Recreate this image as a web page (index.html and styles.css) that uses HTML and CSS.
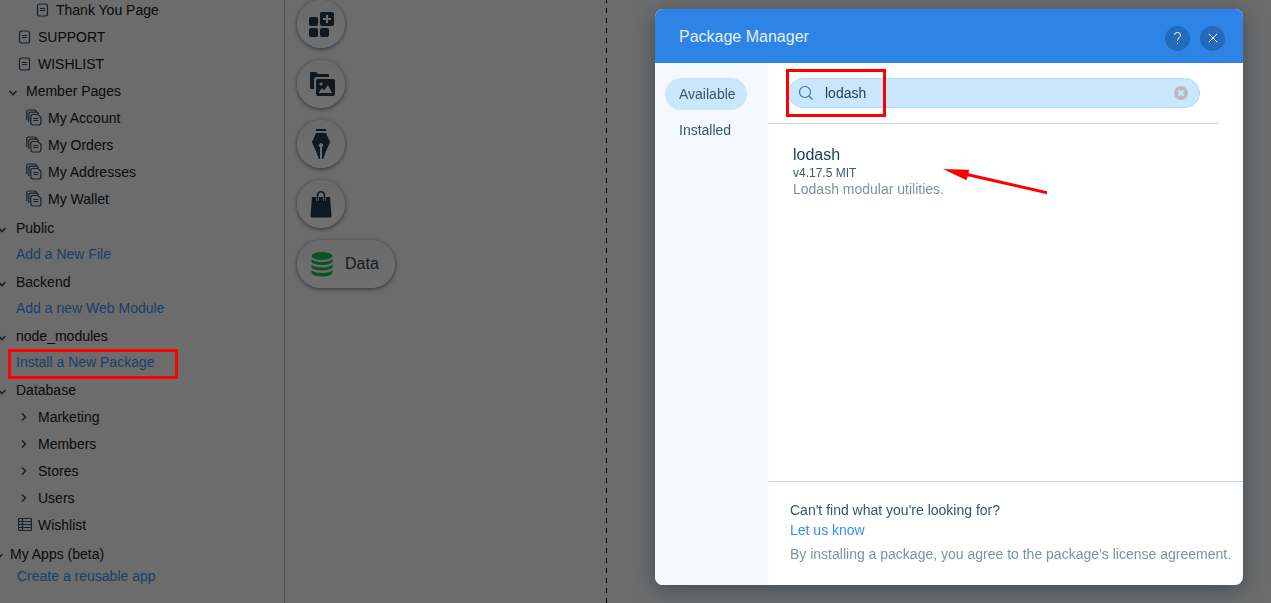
FILE: index.html
```html
<!DOCTYPE html>
<html lang="en">
<head>
<meta charset="utf-8">
<title>Package Manager</title>
<link rel="stylesheet" href="styles.css">
</head>
<body>
<svg class="defs" aria-hidden="true">
  <symbol id="page" viewBox="0 0 13 14"><path d="M3.500 1h6a2 2 0 0 1 2 2v8a2 2 0 0 1-2 2h-6a2 2 0 0 1-2-2V3a2 2 0 0 1 2-2zM4 5.500h5M4 7.500h5"/></symbol>
  <symbol id="pages" viewBox="0 0 16 17"><path d="M6.500 5.500h5.500l3 3v5q0 2.500-2.500 2.500H7.500Q4.800 16 4.800 13.500V7.500Q4.800 5.500 6.500 5.500zM2.800 13V5.200Q2.800 3.200 4.800 3.200H11l1.800 1.500M.8 11V3Q.8 1 2.800 1H9l1.800 1.500M7.300 9.500h5M7.300 11.500h5"/></symbol>
  <symbol id="down" viewBox="0 0 10 6"><path d="M1.500 1L5 4.500 8.500 1" stroke-width="1.600"/></symbol>
  <symbol id="right" viewBox="0 0 6 10"><path d="M1 1.500L4.500 5 1 8.500" stroke-width="1.600"/></symbol>
  <symbol id="grid" viewBox="0 0 14 13"><path d="M1.500.5h11a1 1 0 0 1 1 1v10a1 1 0 0 1-1 1h-11a1 1 0 0 1-1-1v-10a1 1 0 0 1 1-1zM4.500.5v12M.5 3.500h13M.5 6.500h13M.5 9.500h13"/></symbol>
</svg>

<div class="editor">
  <nav class="sidebar" aria-label="Site structure">
    <ul class="tree">
      <li class="row row-deep"><svg class="icon-page"><use href="#page"/></svg>Thank You Page</li>
      <li class="row row-page"><svg class="icon-page"><use href="#page"/></svg>SUPPORT</li>
      <li class="row row-page"><svg class="icon-page"><use href="#page"/></svg>WISHLIST</li>
      <li class="row row-members"><svg class="icon-down"><use href="#down"/></svg>Member Pages</li>
      <li class="row row-member"><svg class="icon-pages"><use href="#pages"/></svg>My Account</li>
      <li class="row row-member"><svg class="icon-pages"><use href="#pages"/></svg>My Orders</li>
      <li class="row row-member"><svg class="icon-pages"><use href="#pages"/></svg>My Addresses</li>
      <li class="row row-member"><svg class="icon-pages"><use href="#pages"/></svg>My Wallet</li>
    </ul>
    <section class="group">
      <h2 class="head"><svg class="icon-down"><use href="#down"/></svg>Public</h2>
      <a class="action" href="#file">Add a New File</a>
    </section>
    <section class="group">
      <h2 class="head"><svg class="icon-down"><use href="#down"/></svg>Backend</h2>
      <a class="action" href="#module">Add a new Web Module</a>
    </section>
    <section class="group">
      <h2 class="head"><svg class="icon-down"><use href="#down"/></svg>node_modules</h2>
      <a class="action" href="#package">Install a New Package<span class="mark mark-install"></span></a>
    </section>
    <section class="group database">
      <h2 class="head"><svg class="icon-down"><use href="#down"/></svg>Database</h2>
      <ul class="list">
        <li class="row row-data"><svg class="icon-right"><use href="#right"/></svg>Marketing</li>
        <li class="row row-data"><svg class="icon-right"><use href="#right"/></svg>Members</li>
        <li class="row row-data"><svg class="icon-right"><use href="#right"/></svg>Stores</li>
        <li class="row row-data"><svg class="icon-right"><use href="#right"/></svg>Users</li>
        <li class="row row-table"><svg class="icon-grid"><use href="#grid"/></svg>Wishlist</li>
      </ul>
    </section>
    <section class="group apps">
      <h2 class="head"><svg class="icon-down"><use href="#down"/></svg>My Apps (beta)</h2>
      <a class="action" href="#app">Create a reusable app</a>
    </section>
  </nav>

  <div class="tools">
    <button class="tool" type="button" aria-label="App market">
      <svg width="26" height="26" viewBox="0 0 26 26"><g fill="#10191f"><rect x="1" y="6" width="9" height="9" rx="2"/><rect x="1" y="17" width="9" height="9" rx="2"/><rect x="12" y="17" width="9" height="9" rx="2"/><rect x="12" y="1" width="14" height="14" rx="2"/></g><path d="M19 4v8M15 8h8" stroke="#6e6e6e" stroke-width="2"/></svg>
    </button>
    <button class="tool" type="button" aria-label="Media">
      <svg width="26" height="26" viewBox="0 0 26 26"><path d="M3 1h5l2 2h10q1 0 1 1v2H9Q6 6 6 9v9H3q-1 0-1-1V2q0-1 1-1z" fill="#10191f"/><rect x="8" y="8" width="19" height="17" rx="2" fill="#10191f"/><circle cx="13" cy="13" r="1.500" fill="#6e6e6e"/><path d="M10.500 22l3.500-5 2 2.500 4-5.500 4 8z" fill="#6e6e6e"/></svg>
    </button>
    <button class="tool" type="button" aria-label="Blog">
      <svg width="26" height="32" viewBox="0 0 26 32"><path d="M8 1h10v2H8zM8 5h10l4 9q-4 9-7 17h-1V19a2 2 0 1 0-2 0v12h-1Q8 23 4 14z" fill="#10191f"/></svg>
    </button>
    <button class="tool" type="button" aria-label="Store">
      <svg width="26" height="28" viewBox="0 0 26 28"><path d="M4 7h18l1.500 19q0 1.500-1.500 1.500H4Q2.500 27.500 2.500 26z" fill="#10191f"/><path d="M9.500 11V6Q9.500 1.700 13 1.700T16.500 6v5" fill="none" stroke="#6e6e6e" stroke-width="3"/><path d="M9.500 11V6Q9.500 1.700 13 1.700T16.500 6v5" fill="none" stroke="#10191f" stroke-width="1.600"/></svg>
    </button>
    <button class="tool tool-wide" type="button">
      <svg width="22" height="25" viewBox="0 0 22 25" fill="#0d5128"><ellipse cx="11" cy="4" rx="10.500" ry="4"/><path d="M.5 7q2.500 3 10.500 3t10.500-3v3q-2 3-10.500 3T.5 10zM.5 12.500q2.500 3 10.500 3t10.500-3v3q-2 3-10.500 3T.5 15.500zM.5 18q2.500 3 10.500 3t10.500-3v3q-2 3.500-10.500 3.500T.5 21z"/></svg>
      Data
    </button>
  </div>
  <div class="stage"></div>
</div>

<div class="dialog" role="dialog" aria-labelledby="title">
  <header class="bar">
    <h1 class="title" id="title">Package Manager</h1>
    <button class="round" type="button" aria-label="Help"><svg width="9" height="14" viewBox="0 0 9 14"><path d="M1.500 4Q1.500 1.500 4.500 1.500T7.500 4Q7.500 5.500 6 6.800T4.500 10M4.500 11.800V13"/></svg></button>
    <button class="round" type="button" aria-label="Close"><svg width="10" height="10" viewBox="0 0 10 10"><path d="M.7.7l8.600 8.600M9.300.7L.7 9.300"/></svg></button>
  </header>
  <div class="body">
    <div class="tabs">
      <button class="tab tab-on" type="button">Available</button>
      <button class="tab" type="button">Installed</button>
    </div>
    <main class="content">
      <form class="search">
        <label class="field">
          <svg width="16" height="16" viewBox="0 0 16 16" fill="none" stroke="#3274bd" stroke-width="1.200"><circle cx="7" cy="7" r="5.500"/><path d="M11 11l3.500 3.500"/></svg>
          <input class="query" type="text" value="lodash" aria-label="Search packages">
          <button class="clear" type="button" aria-label="Clear search"><svg width="14" height="14" viewBox="0 0 14 14"><circle cx="7" cy="7" r="7" fill="#b8babd"/><path d="M4.500 4.500l5 5M9.500 4.500l-5 5" stroke="#cae7fe" stroke-width="2"/></svg></button>
        </label>
        <span class="mark mark-search"></span>
      </form>
      <article class="result">
        <h2 class="name">lodash</h2>
        <p class="version">v4.17.5 MIT</p>
        <p class="about">Lodash modular utilities.</p>
        <svg class="arrow" width="105" height="28" viewBox="0 0 105 28"><path d="M0 1l26 .7-.5 3.500L104 23.200v3L24.700 8.200l-1.200 4z" fill="#fe0000"/></svg>
      </article>
      <footer class="foot">
        <p class="ask">Can't find what you're looking for?</p>
        <a class="know" href="#contact">Let us know</a>
        <p class="terms">By installing a package, you agree to the package’s license agreement.</p>
      </footer>
    </main>
  </div>
</div>
</body>
</html>
```
FILE: styles.css
```css
* { box-sizing: border-box; }
body {
  margin: 0;
  background: #6c6c6c;
  color: #0a0a0a;
  font: 14px/20px "Liberation Sans", Arial, sans-serif;
}
h1, h2, p, ul { margin: 0; padding: 0; font-size: inherit; font-weight: 400; list-style: none; }
a { text-decoration: none; }
button { border: 0; padding: 0; font: inherit; cursor: pointer; }
svg { display: block; flex: none; overflow: visible; }
.defs { position: absolute; width: 0; height: 0; }

.editor { display: flex; height: 100vh; overflow: hidden; }

/* Site tree */
.sidebar { flex: none; width: 285px; border-right: 1px solid #4c4f56; overflow: hidden; }
.sidebar svg { fill: none; stroke: #17232c; stroke-width: 1.2; }
.tree { margin: -4px 0 2px; }
.row { display: flex; align-items: center; height: 27px; }
.row-deep { padding-left: 36px; gap: 7px; }
.row-page { padding-left: 18px; gap: 7px; }
.row-members { padding-left: 8px; gap: 8px; }
.row-member { padding-left: 26px; gap: 6px; }
.row-data { padding-left: 21px; gap: 11px; }
.row-table { padding-left: 18px; gap: 6px; }
.icon-page { width: 13px; height: 14px; }
.icon-pages { width: 16px; height: 17px; }
.icon-down { width: 10px; height: 6px; margin-top: 4px; }
.icon-right { width: 6px; height: 10px; }
.icon-grid { width: 14px; height: 13px; }
.group { margin-bottom: 2px; }
.head { display: flex; align-items: center; gap: 9px; height: 28px; margin-left: -3px; }
.action { position: relative; display: block; width: 170px; padding-left: 16px; line-height: 24px; color: #173f6b; }
.database { margin-bottom: 4px; }
.database .list { margin-top: -1px; }
.apps .head { height: 24px; margin-left: -6px; gap: 6px; }
.apps .action { padding-left: 17px; line-height: 20px; }

.mark { position: absolute; border: 3px solid #fe0000; pointer-events: none; }
.mark-install { left: 8px; top: -1px; width: 170px; height: 30px; }
.mark-search { left: 17px; top: 6px; width: 100px; height: 48px; }

/* Round tool buttons */
.tools { flex: none; display: flex; flex-direction: column; align-items: flex-start; gap: 12px; width: 321px; padding-left: 12px; }
.tool {
  display: flex; align-items: center; justify-content: center;
  width: 48px; height: 48px; border-radius: 24px;
  background: linear-gradient(#6a6a6a, #707070);
  box-shadow: 0 1px 4px rgba(22, 32, 42, .8);
  color: #151b21; font-size: 16px;
}
.tool-wide { justify-content: flex-start; width: 98px; padding-left: 14px; gap: 12px; }
.stage {
  flex: 1;
  background: repeating-linear-gradient(#000 0 3px, transparent 3px 8px, #000 8px 10px) 0 0 / 1px 100% no-repeat;
}

/* Package dialog */
.dialog {
  position: fixed; top: 9px; right: 28px; bottom: 18px; width: 588px;
  display: flex; flex-direction: column; overflow: hidden;
  border-radius: 8px; background: #fff;
  box-shadow: 0 4px 20px rgba(22, 45, 61, .5);
}
.bar { display: flex; align-items: center; gap: 10px; height: 54px; padding: 4px 18px 0 24px; background: #2d83e6; }
.title { flex: 1; padding-bottom: 3px; color: #e4f0fd; font-size: 16px; }
.round { display: flex; align-items: center; justify-content: center; width: 25px; height: 25px; border-radius: 50%; background: #246abb; }
.round svg { fill: none; stroke: #fff; stroke-width: 1; }
.body { flex: 1; display: flex; min-height: 0; }
.tabs { display: flex; flex-direction: column; align-items: flex-start; gap: 4px; width: 114px; padding: 15px 10px; background: #f4f9ff; }
.tab { height: 32px; padding: 0 11px 0 14px; border-radius: 16px; background: transparent; color: #35566f; }
.tab-on { background: #cae7fe; }
.content { flex: 1; display: flex; flex-direction: column; min-width: 0; }
.search { position: relative; margin-right: 24px; padding: 15px 19px; border-bottom: 1px solid #c7d5e2; }
.field { display: flex; align-items: center; gap: 11px; height: 30px; padding: 0 11px 0 9px; border: 1px solid #aedafb; border-radius: 15px; background: #cae7fe; }
.query { flex: 1; min-width: 0; height: 20px; padding: 0; border: 0; outline: 0; background: transparent; color: #1c3f59; font: inherit; }
.clear { background: transparent; }
.result { position: relative; flex: 1; padding: 21px 24px; }
.name { color: #1f4059; font-size: 16px; line-height: 20px; }
.version { color: #3c5a71; font-size: 12px; line-height: 16px; }
.about { color: #7d92a5; line-height: 16px; }
.arrow { position: absolute; left: 174px; top: 44px; }
.foot { padding: 18px 8px 21px 21px; border-top: 1px solid #c7d5e2; }
.ask { color: #35566f; }
.know { color: #3a8dee; }
.terms { margin-top: 4px; color: #7d92a5; }
```
